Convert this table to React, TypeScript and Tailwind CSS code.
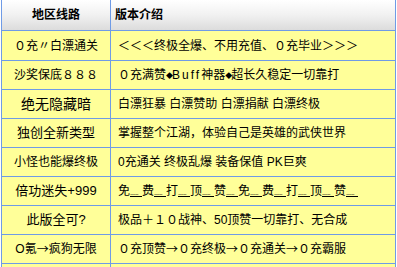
const cjk = "font-['Noto_Sans_CJK_SC',sans-serif]";

function Arrow() {
  return <span className={cjk}>→</span>;
}

function Diamond() {
  return <span className="inline-block w-[6px] text-center text-[7px] leading-none">◆</span>;
}

function Dotted({ words }: { words: string[] }) {
  return (
    <span className="flex w-[240px]">
      {words.map((w, i) => (
        <span key={i} className="flex w-[24px] shrink-0 items-end overflow-hidden">
          <span className="w-[12px] shrink-0">{w}</span>
          <span className="mb-[3px] w-[12px] shrink-0 overflow-hidden border-b border-black text-[7px] leading-[6px] tracking-[-0.6px]">
            ......
          </span>
        </span>
      ))}
    </span>
  );
}

const rows: { name: React.ReactNode; nameSize: string; desc: React.ReactNode; h: string }[] = [
  { name: "０充〃白漂通关", nameSize: "text-[12px]", desc: "＜＜＜终极全爆、不用充值、０充毕业＞＞＞", h: "h-[30px]" },
  {
    name: "沙奖保底８８８",
    nameSize: "text-[12px]",
    desc: (
      <span className="flex items-center">
        ０充满赞<Diamond />
        <span className="tracking-[2px]">Buff</span>神器<Diamond />超长久稳定一切靠打
      </span>
    ),
    h: "h-[29px]",
  },
  { name: "绝无隐藏暗", nameSize: "text-[14px]", desc: "白漂狂暴 白漂赞助 白漂捐献 白漂终极", h: "h-[29px]" },
  { name: "独创全新类型", nameSize: "text-[13px]", desc: "掌握整个江湖，体验自己是英雄的武侠世界", h: "h-[29px]" },
  { name: "小怪也能爆终极", nameSize: "text-[12px]", desc: "0充通关 终极乱爆 装备保值 PK巨爽", h: "h-[29px]" },
  {
    name: "倍功迷失+999",
    nameSize: "text-[13px]",
    desc: <Dotted words={["免", "费", "打", "顶", "赞", "免", "费", "打", "顶", "赞"]} />,
    h: "h-[29px]",
  },
  { name: "此版全可?", nameSize: "text-[13px]", desc: "极品＋１０战神、50顶赞一切靠打、无合成", h: "h-[29px]" },
  {
    name: (
      <>
        O氪<Arrow />疯狗无限
      </>
    ),
    nameSize: "text-[12px]",
    desc: (
      <>
        ０充顶赞<Arrow />０充终极<Arrow />０充通关<Arrow />０充霸服
      </>
    ),
    h: "h-[29px]",
  },
  { name: "", nameSize: "text-[12px]", desc: "", h: "h-[29px]" },
];

export default function App() {
  return (
    <div className="h-[267px] w-[397px] overflow-hidden bg-white font-['Liberation_Sans','Noto_Sans_CJK_SC',sans-serif] text-black">
      <div className="ml-px w-[395px] border-x border-[#6f9be6]">
        {/* header */}
        <div className="flex h-[31px] border-b border-[#6f9be6] bg-linear-to-b from-[#ffffff] via-[#f1f1f1] to-[#dcdcdc] text-[12px] font-bold">
          <div className="flex w-[109px] items-center justify-center border-r border-[#6f9be6]">地区线路</div>
          <div className="flex flex-1 items-center pl-[4px]">版本介绍</div>
        </div>

        {rows.map((r, i) => (
          <div key={i} className={`flex ${r.h} border-b border-[#6f9be6] bg-[#ffff99]`}>
            <div
              className={`flex w-[109px] items-center justify-center whitespace-nowrap border-r border-[#6f9be6] ${r.nameSize}`}
            >
              {r.name}
            </div>
            <div className="flex flex-1 items-center whitespace-nowrap pl-[7px] text-[12px]">{r.desc}</div>
          </div>
        ))}
      </div>
    </div>
  );
}
